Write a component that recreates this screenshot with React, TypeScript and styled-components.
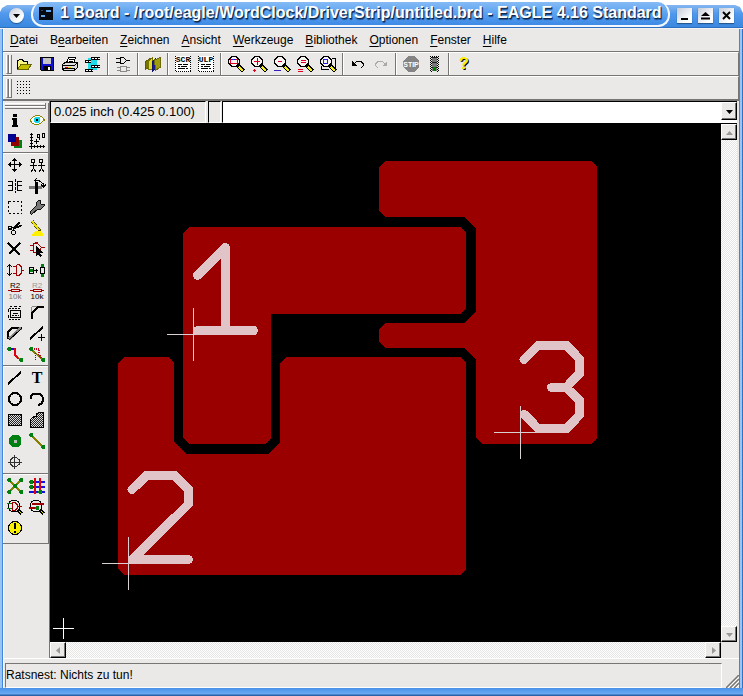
import React from "react";
import styled, { createGlobalStyle, css } from "styled-components";

const GREY = "#eae9e8";
const SHADE = "#777675";

const GlobalStyle = createGlobalStyle`
  * { box-sizing: border-box; }
  body {
    margin: 0;
    background: #fff;
    color: #000;
    font-family: "Liberation Sans", Arial, sans-serif;
    font-size: 12px;
  }
  button, input { font: inherit; color: inherit; }
`;

const Window = styled.div`
  display: flex;
  flex-direction: column;
  height: 100vh;
`;

const TitleBar = styled.header`
  display: flex;
  flex: none;
  align-items: flex-start;
  height: 29px;
  padding-right: 9px;
  background: linear-gradient(
    #fff 5px, #86b6f1 5px, #4f98ec 14px, #3b88e0 27px, #2d6fc0 27px 28px, #f4f3f2 28px
  );
  clip-path: polygon(
    0 12px, 2px 8px, 7px 5px, 34px 5px, 34px 0,
    calc(100% - 76px) 0, calc(100% - 76px) 5px, calc(100% - 8px) 5px, calc(100% - 3px) 7px, 100% 13px,
    100% 100%, 0 100%
  );
`;

const TitleTab = styled.div`
  display: flex;
  flex: 1;
  min-width: 0;
  align-items: center;
  gap: 7px;
  height: 25px;
  margin: 2px 7px 0 7px;
  padding: 0 0 1px 6px;
  border: solid #f4f9ff;
  border-width: 0 2px 2px 2px;
  border-radius: 12px;
  background: linear-gradient(#86bbf5, #5fa4f1 45%, #3d8ae6);
`;

const Title = styled.h1`
  flex: 1;
  margin: 0;
  color: #fff;
  font-size: 16px;
  font-weight: bold;
  line-height: 22px;
  white-space: nowrap;
  text-shadow: 1px 1px 0 #10294a, 1px 2px 1px #1d4c8c;
`;

const TitleButton = styled.button<{ $round?: boolean }>`
  display: grid;
  flex: none;
  place-items: center;
  width: 15px;
  height: 15px;
  padding: 0;
  border: 0;
  background: linear-gradient(135deg, #c6ccd6, #ffffff 75%);
  box-shadow: 0 1px 1px #24588f;
  ${(p) =>
    p.$round &&
    css`
      margin: 8px 0 0 9px;
      border-radius: 50%;
    `}
`;

const WindowButtons = styled.div`
  display: flex;
  gap: 6px;
  padding-top: 8px;
`;

const Frame = styled.div`
  display: flex;
  flex: 1;
  min-height: 0;
  padding: 0 4px 8px 3px;
  background:
    linear-gradient(#4a92e8, #6aaaf2 6px, #2a62a8 7px) 0 100% / 100% 8px no-repeat,
    linear-gradient(90deg, #9cc4f3 2px, #3f87dd 2px 3px, #fff 3px calc(100% - 4px), #3f87dd calc(100% - 4px) calc(100% - 3px), #9cc4f3 calc(100% - 3px) calc(100% - 1px), #2f73c8 calc(100% - 1px));
`;

const Panel = styled.div`
  display: flex;
  flex: 1;
  flex-direction: column;
  min-width: 0;
  background: ${GREY};
  box-shadow: inset 1px 0 0 #fff;
`;

const MenuBar = styled.nav`
  display: flex;
  flex: none;
  gap: 12px;
  height: 23px;
  padding-left: 7px;
  border-bottom: 1px solid ${SHADE};
`;

const MenuItem = styled.button`
  padding: 0;
  border: 0;
  background: none;
  line-height: 22px;
  u { text-underline-offset: 2px; }
`;

const Toolbar = styled.div`
  display: flex;
  flex: none;
  align-items: center;
  height: 24px;
  padding-left: 3px;
  border-top: 1px solid #fff;
  border-bottom: 1px solid ${SHADE};
  border-right: 1px solid ${SHADE};
`;

const Grip = styled.span`
  flex: none;
  width: 6px;
  height: 19px;
  border: 1px solid ${SHADE};
  border-top: 0;
  border-left-color: #fff;
  background: linear-gradient(90deg, #aaa9a8 1px, ${SHADE} 1px 2px, #fff 2px 3px, ${GREY} 3px);
`;

const PaletteGrip = styled.div`
  height: 6px;
  margin: 2px 2px 0;
  border: solid ${SHADE};
  border-width: 0 1px 1px 0;
  background: linear-gradient(#fff 1px, ${GREY} 1px 2px, ${SHADE} 2px 3px, #fff 3px 4px, ${GREY} 4px);
`;

const Separator = styled.span`
  flex: none;
  align-self: stretch;
  width: 2px;
  margin: 0 2px 0 3px;
  border-left: 1px solid ${SHADE};
  border-right: 1px solid #fff;
`;

const ToolButton = styled.button`
  display: grid;
  flex: none;
  place-items: center;
  width: 23px;
  height: 21px;
  padding: 0;
  border: 0;
  background: none;
`;

const Body = styled.div`
  display: flex;
  flex: 1;
  min-height: 0;
  border-top: 1px solid ${SHADE};
`;

const SideColumn = styled.aside`
  flex: none;
  width: 47px;
  border-right: 1px solid ${SHADE};
`;

const Palette = styled.div`
  padding-bottom: 5px;
  border-right: 1px solid ${SHADE};
  border-bottom: 1px solid ${SHADE};
`;

const PaletteGroup = styled.div`
  display: grid;
  grid-template-columns: 22px 22px;
  grid-auto-rows: 21px;
  padding-left: 1px;
  & + & {
    margin-top: 1px;
    padding-top: 1px;
    border-top: 1px solid ${SHADE};
    box-shadow: inset 0 1px 0 #fff;
  }
  button { width: 22px; }
`;

const Workspace = styled.main`
  display: flex;
  flex: 1;
  flex-direction: column;
  min-width: 0;
  padding-right: 2px;
`;

const CommandRow = styled.div`
  display: flex;
  flex: none;
  height: 22px;
`;

const Coordinates = styled.output`
  width: 156px;
  margin-right: 2px;
  padding-left: 3px;
  border: 1px solid #000;
  border-right-color: #fff;
  border-bottom-color: #fff;
  line-height: 20px;
  font-size: 13px;
`;

const StatusCell = styled.span`
  width: 13px;
  margin-right: 1px;
  border: 1px solid #000;
  border-right-color: #fff;
  border-bottom-color: #fff;
`;

const Combo = styled.div`
  display: flex;
  flex: 1;
  min-width: 0;
  padding-bottom: 1px;
  border: 1px solid #000;
  border-right: 0;
  border-bottom: 1px solid #fff;
  background: #fff;
`;

const CommandInput = styled.input`
  flex: 1;
  min-width: 0;
  padding: 0 4px;
  border: 0;
  outline: 0;
  background: transparent;
`;

const BevelButton = styled.button`
  display: grid;
  flex: none;
  place-items: center;
  width: 16px;
  height: 18px;
  padding: 0;
  border: 1px solid #000;
  border-top-color: #fff;
  border-left-color: #fff;
  background: ${GREY};
  box-shadow: inset -1px -1px 0 ${SHADE};
`;

const ViewGrid = styled.div`
  display: grid;
  flex: 1;
  grid-template: minmax(0, 1fr) 16px / minmax(0, 1fr) 16px;
  min-height: 0;
  border-top: 1px solid #000;
`;

const Canvas = styled.div`
  overflow: hidden;
  background: #000;
  svg { display: block; }
`;

const ScrollBar = styled.div<{ $vertical?: boolean }>`
  display: flex;
  flex-direction: ${(p) => (p.$vertical ? "column" : "row")};
  justify-content: space-between;
  background: repeating-conic-gradient(#fff 0 25%, #e6e5e4 0 50%) 0 0 / 2px 2px;
  button { width: 16px; height: 16px; }
`;

const StatusBar = styled.footer`
  display: flex;
  flex: none;
  align-items: flex-end;
  justify-content: space-between;
  height: 30px;
  padding-left: 2px;
  border-top: 1px solid #fff;
`;

const StatusText = styled.div`
  flex: 1;
  height: 25px;
  margin-right: 4px;
  border: 1px solid ${SHADE};
  border-right-color: #fff;
  border-bottom-color: #fff;
  line-height: 22px;
`;

const IconSvg = styled.svg`
  display: block;
  overflow: visible;
`;

const Icon = ({ children }: { children: React.ReactNode }) => (
  <IconSvg width="18" height="18" viewBox="0 0 18 18" fill="none" stroke="#000" shapeRendering="crispEdges" aria-hidden="true">
    {children}
  </IconSvg>
);

const Triangle = ({ dir, color = "#000" }: { dir: "up" | "down" | "left" | "right"; color?: string }) => {
  const points = { up: "0,6 7,6 3.5,2", down: "0,2 7,2 3.5,6", left: "5,0 5,7 1,3.5", right: "2,0 2,7 6,3.5" };
  return (
    <svg width="7" height="7" viewBox="0 0 7 7" aria-hidden="true">
      <polygon points={points[dir]} fill={color} />
    </svg>
  );
};

const Magnifier = ({ children }: { children: React.ReactNode }) => (
  <Icon>
    <path d="M11 10.500L16.500 16" strokeWidth="4" />
    <path d="M12 12L16 16" stroke="#f4ee20" strokeWidth="2" />
    <path d="M5 1.500H9L12.500 5V8L9 11.500H5L1.500 8V5Z" fill="#f8f4f4" />
    {children}
  </Icon>
);

const Page = ({ label }: { label: string }) => (
  <Icon>
    <rect x="1" y="1" width="16" height="16" fill="#fff" stroke="none" />
    <path d="M2 16.500H17" strokeDasharray="1 1" />
    <path d="M1.500 1V17M16.500 1V17" strokeDasharray="1 1" />
    <path d="M4 9.500H8M9 9.500H14M4 11.500H6M7 11.500H13M4 13.500H11M12 13.500H14" />
    <text x="9" y="7" textAnchor="middle" fontFamily="Liberation Mono" fontWeight="bold" fontSize="8" fill="#000" stroke="none">
      {label}
    </text>
  </Icon>
);

const Resistor = ({ label, value }: { label: string; value: string }) => (
  <Icon>
    <g stroke="none" fontFamily="Liberation Sans" fontSize="8" textAnchor="middle">
      <text x="9" y="6" fill={label}>R2</text>
      <text x="9" y="17" fill={value}>10k</text>
    </g>
    <path d="M2 8.500H5M14 8.500H16M5.500 7.500H13.500V9.500H5.500Z" stroke="#a00000" />
  </Icon>
);

const Dither = ({ id, d }: { id: string; d: string }) => (
  <Icon>
    <defs>
      <pattern id={id} width="2" height="2" patternUnits="userSpaceOnUse">
        <rect width="2" height="2" fill="#ddd" stroke="none" />
        <rect width="1" height="1" fill="#222" stroke="none" />
        <rect x="1" y="1" width="1" height="1" fill="#222" stroke="none" />
      </pattern>
    </defs>
    <path d={d} fill={`url(#${id})`} />
  </Icon>
);

const GreenDot = ({ x, y }: { x: number; y: number }) => (
  <path d={`M${x - 1} ${y - 2}h2l1 1v2l-1 1h-2l-1 -1v-2z`} fill="#008010" stroke="none" />
);

type Tool = [string, React.ReactNode];

const TOOLBAR: Tool[][] = [
  [
    ["Öffnen", <Icon><path d="M2.500 14V5.500H3.500L4.500 4.500H7.500L8.500 6.500H12.500V9" fill="#f8f480" /><path d="M2.500 14.500L6 9.500H16.500L13 14.500Z" fill="#c4be00" stroke="#6a6600" /></Icon>],
    ["Speichern", <Icon><path d="M2.500 2.500H15.500V15.500H3.500L2.500 14.500Z" fill="#1010d0" /><rect x="5" y="3" width="8" height="6" fill="#c4c4c4" stroke="none" /><rect x="5" y="11" width="8" height="5" fill="#000" stroke="none" /><rect x="10" y="12" width="2" height="3" fill="#fff" stroke="none" /></Icon>],
    ["Drucken", <Icon><path d="M5.500 8L7.500 2.500H14.500L13 8" fill="#fff" /><path d="M8 4.500H13M7.500 6.500H12" /><path d="M1.500 9.500L4 7.500H16.500V12.500L13 15.500H2.500L1.500 13.500Z" fill="#ddd" /><path d="M2 10.500H13.500L16 8M2 13.500H13.500V15" /><path d="M4 12H7" stroke="#d00020" /><path d="M7 12H10" stroke="#e0d000" /></Icon>],
    ["Board", <Icon><path d="M4 9H13" stroke="#20dce8" strokeWidth="12" /><path d="M7 3.500H16M1 6.500H7M7 11.500H16M1 15.500H9" strokeWidth="3" /><path d="M8 3.500H16M2 6.500H7M8 11.500H16M2 15.500H9" stroke="#fff" strokeDasharray="2 1" /></Icon>],
  ],
  [["Schaltplan", <Icon><path d="M6.500 2.500H9.500L12.500 5.500L9.500 8.500H6.500ZM2 3.500H6M2 7.500H6M12 5.500H16" /><path d="M6.500 11.500H12.500V16.500H6.500ZM3 12.500H6M3 15.500H6M13 12.500H16M13 15.500H16" stroke="#888" /></Icon>]],
  [["Bibliothek", <Icon><path d="M1.500 6.500L6 3.500V12L1.500 14Z" fill="#777500" stroke="#5c5a00" /><path d="M4.500 6.500L8 3V14.500L4.500 15Z" fill="#e0dc20" stroke="#777500" /><path d="M8.500 6.500L11 4.500V14L8.500 16Z" fill="#1717a0" stroke="#101070" /><path d="M10.500 5L16.500 2.500V12L11.500 15.500Z" fill="#a09c10" stroke="#6c6a00" /></Icon>]],
  [["Script ausführen", <Page label="SCR" />], ["ULP ausführen", <Page label="ULP" />]],
  [
    ["Einpassen", <Magnifier><rect x="3.500" y="4.500" width="7" height="4" stroke="#e00020" /><path d="M4 4.500H10V8.500" stroke="#2020e0" strokeDasharray="2 1" /></Magnifier>],
    ["Vergrößern", <Magnifier><path d="M4 6.500H10" stroke="#e00020" /><path d="M7.500 3V10" stroke="#2020e0" /><path d="M3 15.500H6M4.500 14V17" stroke="#e00020" /></Magnifier>],
    ["Verkleinern", <Magnifier><path d="M5 6.500H9" stroke="#d00030" /><path d="M1 15.500H8" stroke="#3020c0" /></Magnifier>],
    ["Neu zeichnen", <Magnifier><path d="M5 5.500H10M5 7.500H10M2 14.500H7M2 16.500H7" stroke="#e00020" /></Magnifier>],
    ["Ausschnitt", <Magnifier><path d="M13 3.500H16.500V13M2.500 11V14.500H10" /><rect x="4.500" y="4.500" width="4" height="4" stroke="#2020e0" /></Magnifier>],
  ],
  [
    ["Rückgängig", <Icon><path d="M5 9L7.500 6.500H12L14.500 9V10.500L12 13" /><path d="M3 6V11H8Z" fill="#000" stroke="none" /></Icon>],
    ["Wiederholen", <Icon><path d="M13 9L10.500 6.500H6L3.500 9V10.500L6 13" stroke="#aaa" /><path d="M15 6V11H10Z" fill="#aaa" stroke="none" /></Icon>],
  ],
  [
    ["Stop", <Icon><path d="M6 1H12L17 6V12L12 17H6L1 12V6Z" fill="#848484" stroke="none" /><text x="9" y="12" textAnchor="middle" fontFamily="Liberation Sans" fontWeight="bold" fontSize="7" fill="#fff" stroke="none">STIP</text></Icon>],
    ["Ampel", <Icon><path d="M5.500 1V17M7.500 1V17M9.500 1V17M11.500 1V17M13.500 1V17" strokeDasharray="1 1" /><path d="M6.500 2V17M12.500 2V17" strokeDasharray="1 1" /><rect x="7" y="2" width="5" height="14" fill="#777" stroke="none" /><path d="M7 2H12M7 7H12M7 12H12" stroke="#222" /><circle cx="9.500" cy="14" r="2" fill="#008000" stroke="none" /></Icon>],
  ],
  [["Hilfe", <Icon><g fontFamily="Liberation Sans" fontWeight="bold" fontSize="16" textAnchor="middle" stroke="none"><text x="10" y="15" fill="#000">?</text><text x="9" y="14" fill="#f8f000">?</text></g></Icon>]],
];

const PALETTE: Tool[][] = [
  [
    ["Info", <Icon><path d="M7 3H11V6H7ZM6 7H11V14H12V16H6V14H7V9H6Z" fill="#000" stroke="none" /></Icon>],
    ["Show", <Icon><path d="M2 9L5 6L8 4.500H11L14 6L16.500 9L13 12L10 13.500H7L4 12Z" fill="#fff" stroke="#8a8500" strokeWidth="1" /><path d="M7 6H11L12 7V10L11 12H7L6 10V7Z" fill="#10d8e8" stroke="none" /><rect x="8" y="8" width="2" height="2" fill="#000" stroke="none" /></Icon>],
    ["Display", <Icon><rect x="8" y="8" width="8" height="8" fill="#008010" stroke="none" /><rect x="5" y="5" width="8" height="9" fill="#900000" stroke="none" /><rect x="2" y="2" width="8" height="8" fill="#000090" stroke="none" /></Icon>],
    ["Mark", <Icon><path d="M3.500 1V17M1 14.500H17M2 2.500H5M2 5.500H5M2 8.500H5M2 11.500H5M6.500 13V16M9.500 13V16M12.500 13V16M15.500 13V16M6 9.500H11M8.500 7V12" /><path d="M9.500 2.500H11.500V5.500H9.500ZM11.500 5V7.500M14.500 1.500H16.500V5.500H14.500Z" /></Icon>],
  ],
  [
    ["Move", <Icon><path d="M8.500 2V16M2 8.500H16" /><path d="M6 4.500H11M7 3.500H10M6 13.500H11M7 14.500H10M4.500 6V11M3.500 7V10M13.500 6V11M14.500 7V10" /></Icon>],
    ["Copy", <Icon><path d="M3.500 3.500H6.500V6.500H3.500ZM11.500 3.500H14.500V6.500H11.500Z" /><path d="M5.500 7V12L3 16M5.500 12L8 16M2 9.500H9M13.500 7V12L11 16M13.500 12L16 16M10 9.500H17" /></Icon>],
    ["Mirror", <Icon><path d="M2 4.500H6.500V13.500H2M2 8.500H6M16 4.500H11.500V13.500H16M12 8.500H16" /><path d="M9.500 2V16" strokeDasharray="3 1" /></Icon>],
    ["Rotate", <Icon><rect x="1" y="9" width="13" height="3" fill="#777" stroke="none" /><rect x="7" y="5" width="3" height="12" fill="#000" stroke="none" /><path d="M7 3.500H11L15.500 7V10M13 7.500L15.500 10L18 7.500M9 1L6.500 3.500L9 6" /></Icon>],
    ["Group", <Icon><rect x="2.500" y="3.500" width="13" height="12" strokeDasharray="2 2" /></Icon>],
    ["Change", <Icon><path d="M2 14L8 8V5L11 2H12V5L13 6H16V8L13 11H10L4 16H3L2 15Z" fill="#777" stroke="#111" /></Icon>],
    ["Cut", <Icon><path d="M6 8.500L16 6.500M7 10.500L14 3.500M8 9.500L15 7.500M7 9.500L13 3.500" /><circle cx="4" cy="9" r="2" strokeWidth="1" /><circle cx="7.500" cy="13.500" r="2" strokeWidth="1" /><path d="M2 9.500H6M7.500 11V12" /></Icon>],
    ["Paste", <Icon><path d="M4 2L12 12" strokeWidth="3" stroke="#555000" /><path d="M4 2L11 11" stroke="#eee000" strokeWidth="2" /><path d="M4 16L7 12H12L15 15V17H4Z" fill="#fff000" stroke="none" /></Icon>],
    ["Delete", <Icon><path d="M2 3L14 15M14 3L3 14" strokeWidth="2" /></Icon>],
    ["Add", <Icon><path d="M5.500 3.500H9.500L13.500 7.500L9.500 12.500H5.500ZM2 5.500H5M2 10.500H5M13 7.500H17M7 2.500H10" stroke="#a00000" /><path d="M8 6V16L10 14L12 17L14 16L12 13H15Z" fill="#000" stroke="none" /></Icon>],
    ["Pinswap", <Icon><path d="M3.500 4V15M1 6L3.500 3.500L6 6M1 12L3.500 14.500L6 12" /><path d="M7 5.500H10M7 12.500H10M10.500 3.500H13L15.500 6V12L13 14.500H10.500V3.500M15 9.500H18" stroke="#a00000" /></Icon>],
    ["Gateswap", <Icon><path d="M1.500 6.500H5.500V12.500H1.500ZM6 9.500H10M8.500 7.500V12M12.500 6.500H16.500V12.500H12.500Z" /><path d="M14.500 3V6M14.500 13V16M2 9.500H5" stroke="#008010" strokeWidth="3" /></Icon>],
    ["Name", <Resistor label="#000" value="#777" />],
    ["Value", <Resistor label="#999" value="#000" />],
    ["Smash", <Icon><path d="M4.500 7.500H14.500V14.500H4.500ZM7 10.500H12M4 3.500H6M8 3.500H11M13 3.500H15M2 6V9M2 12V15" /><path d="M3 5.500H15M3 16.500H15M6 12.500H13" strokeDasharray="2 1" /></Icon>],
    ["Miter", <Icon><path d="M3.500 16V4M4 3.500H16" stroke="#888" /><path d="M4 16V10L10 4H16" strokeWidth="2" /></Icon>],
    ["Split", <Icon><path d="M2 15V8L6 4H16" strokeWidth="2" /><path d="M3 15L15 4" stroke="#888" strokeWidth="3" /><path d="M3 16L15 5" /></Icon>],
    ["Optimize", <Icon><path d="M2 15L15 3" strokeWidth="2" /><path d="M10 13.500H17M13.500 10V17" /></Icon>],
    ["Route", <Icon><path d="M3 4H9" stroke="#1010e0" strokeWidth="2" /><path d="M9 3V10L13 14" stroke="#e00010" strokeWidth="2" /><path d="M12 12L15 15" stroke="#888000" /><GreenDot x={3} y={4} /><GreenDot x={15} y={15} /></Icon>],
    ["Ripup", <Icon><path d="M3 4L15 15" stroke="#888000" strokeWidth="2" /><path d="M4 3.500H11V9L14 15" stroke="#c00020" strokeDasharray="1 1" strokeWidth="2" /><path d="M7 8V15" stroke="#2020b0" strokeDasharray="1 1" /><GreenDot x={3} y={4} /><GreenDot x={15} y={15} /></Icon>],
  ],
  [
    ["Wire", <Icon><path d="M2 15L15 3" strokeWidth="2" /></Icon>],
    ["Text", <Icon><text x="9" y="14" textAnchor="middle" fontFamily="Liberation Serif" fontSize="16" fontWeight="bold" fill="#000" stroke="none">T</text></Icon>],
    ["Circle", <Icon><circle cx="9" cy="9" r="6" strokeWidth="2" /></Icon>],
    ["Arc", <Icon><path d="M3 9V6L6 3.500H11L14 6L15 8V11L13 14L10 15" strokeWidth="2" /></Icon>],
    ["Rect", <Dither id="dither-rect" d="M2.500 3.500H15.500V14.500H2.500Z" />],
    ["Polygon", <Dither id="dither-polygon" d="M2.500 16.500V8.500L6 5.500H8.500V3L10.500 1.500H15.500V16.500Z" />],
    ["Via", <Icon><path d="M6 3H12L15 6V12L12 15H6L3 12V6Z" fill="#008010" stroke="none" /><rect x="8" y="8" width="3" height="3" fill="#bbb" stroke="none" /></Icon>],
    ["Signal", <Icon><path d="M3 3L15 15" stroke="#888000" strokeWidth="1.500" /><GreenDot x={3} y={3} /><GreenDot x={15} y={15} /></Icon>],
    ["Hole", <Icon><path d="M7 4.500H10L13.500 7V11L10 13.500H7L4.500 11V7ZM2 9.500H16M8.500 2V16" stroke="#333" /></Icon>],
  ],
  [
    ["Ratsnest", <Icon><path d="M3 3L15 15M15 3L3 15" stroke="#888000" strokeWidth="1.500" /><GreenDot x={3} y={3} /><GreenDot x={15} y={3} /><GreenDot x={9} y={9} /><GreenDot x={3} y={15} /><GreenDot x={15} y={15} /></Icon>],
    ["Auto", <Icon><path d="M1 5H17M1 10H17M1 15H17" stroke="#1010e0" strokeWidth="2" strokeDasharray="5 1" /><path d="M7 1V17M12 1V17" stroke="#e00010" strokeWidth="2" /><GreenDot x={3} y={5} /><GreenDot x={3} y={10} /><GreenDot x={12} y={15} /></Icon>],
    ["ERC", <Icon><circle cx="8" cy="8" r="6" /><path d="M1 5.500H6M1 10.500H6" stroke="#008010" strokeWidth="1" /><path d="M6 4.500H9L11.500 7V10L9 12.500H6ZM12 8.500H16" stroke="#a00000" /><path d="M12 12L16 16" strokeWidth="3" /><path d="M13 13L16 16" stroke="#f0e800" /></Icon>],
    ["DRC", <Icon><circle cx="8" cy="8" r="6" /><path d="M4 6H16M1 10H9" stroke="#a00000" strokeWidth="2" /><GreenDot x={9} y={10} /><path d="M12 12L16 16" strokeWidth="3" /><path d="M13 13L16 16" stroke="#f0e800" /></Icon>],
    ["Errors", <Icon><circle cx="9" cy="9" r="6.500" fill="#f8f000" /><path d="M9 4V10M9 12V14" strokeWidth="2" /></Icon>],
  ],
];

const MENUS = ["_Datei", "B_earbeiten", "_Zeichnen", "_Ansicht", "_Werkzeuge", "_Bibliothek", "_Optionen", "_Fenster", "_Hilfe"];

const MenuLabel = ({ text }: { text: string }) => {
  const at = text.indexOf("_");
  return (
    <>
      {text.slice(0, at)}
      <u>{text[at + 1]}</u>
      {text.slice(at + 2)}
    </>
  );
};

const BoardDrawing = () => (
  <svg width="671" height="518" viewBox="50 124 671 518" shapeRendering="crispEdges" role="img" aria-label="Board">
    <g fill="#9a0000">
      <path d="M189 227H460L466 233V308L460 314H271V438L265 444H189L183 438V233Z" />
      <path d="M124 357H168L174 363V442L186 454H268L280 442V363L286 357H460L466 363V569L460 575H124L118 569V363Z" />
      <path d="M385 161H591L597 167V438L591 444H482L476 438V360L464 348H385L379 342V329L385 323H464L476 312V229L464 217H385L379 211V167Z" />
    </g>
    <g fill="none" stroke="#d8d0d2" strokeWidth="1">
      <path d="M167 334.500H220M193.500 308V361" />
      <path d="M102 563.500H155M128.500 537V590" />
      <path d="M494 432.500H547M520.500 406V459" />
      <path d="M53 628.500H74M63.500 618V639" stroke="#fff" />
    </g>
    <g fill="none" stroke="#e0c4c8" strokeWidth="9" strokeLinecap="round" strokeLinejoin="miter" strokeMiterlimit="2">
      <path d="M197.500 275.500L225.500 247.500V330.500M197.500 330.500H253.500" strokeLinejoin="round" />
      <path d="M132 489.500L146.500 475.500H174.500L188.500 489.500V504L132.500 559.500H188.500" />
      <path d="M128 564V557L134 552L140 564Z" fill="#e0c4c8" stroke="none" />
      <path d="M524 359.500L538 345.500H566.500L579.500 359V373.500L566 387.500H551.500M566 387.500L579.500 400.500V415L566.500 428.500H538L524.500 414.500" />
    </g>
  </svg>
);

export default function App() {
  return (
    <Window>
      <GlobalStyle />
      <TitleBar>
        <TitleButton $round aria-label="Fenstermenü"><Triangle dir="down" /></TitleButton>
        <TitleTab>
          <svg width="14" height="13" viewBox="0 0 14 13" shapeRendering="crispEdges" aria-hidden="true">
            <rect width="14" height="13" fill="#050a10" />
            <path d="M7 3.500H12M2 8.500H6" stroke="#5fa8f0" strokeWidth="2" />
            <path d="M2 3H4" stroke="#24486c" strokeWidth="1" />
          </svg>
          <Title>1 Board - /root/eagle/WordClock/DriverStrip/untitled.brd - EAGLE 4.16 Standard</Title>
        </TitleTab>
        <WindowButtons>
          <TitleButton aria-label="Minimieren">
            <svg width="9" height="9" viewBox="0 0 9 9"><path d="M1 8H8" stroke="#000" strokeWidth="2" /></svg>
          </TitleButton>
          <TitleButton aria-label="Maximieren">
            <svg width="9" height="9" viewBox="0 0 9 9"><path d="M0 5L4.500 1L9 5ZM0 6.500H9V8.500H0Z" /></svg>
          </TitleButton>
          <TitleButton aria-label="Schließen">
            <svg width="9" height="9" viewBox="0 0 9 9"><path d="M1 1L8 8M8 1L1 8" stroke="#000" strokeWidth="2" /></svg>
          </TitleButton>
        </WindowButtons>
      </TitleBar>
      <Frame>
        <Panel>
          <MenuBar>
            {MENUS.map((m) => (
              <MenuItem key={m}><MenuLabel text={m} /></MenuItem>
            ))}
          </MenuBar>
          <Toolbar>
            <Grip />
            {TOOLBAR.map((group, i) => (
              <React.Fragment key={i}>
                {i > 0 && <Separator />}
                {group.map(([name, icon]) => (
                  <ToolButton key={name} aria-label={name}>{icon}</ToolButton>
                ))}
              </React.Fragment>
            ))}
          </Toolbar>
          <Toolbar>
            <Grip />
            <ToolButton aria-label="Raster">
              <Icon>
                {[3, 6, 9, 12, 15].map((y) => (
                  <path key={y} d={`M2 ${y - 0.5}H16`} strokeDasharray="1 2" />
                ))}
              </Icon>
            </ToolButton>
          </Toolbar>
          <Body>
            <SideColumn>
              <Palette>
                <PaletteGrip />
                {PALETTE.map((group, i) => (
                  <PaletteGroup key={i}>
                    {group.map(([name, icon]) => (
                      <ToolButton key={name} aria-label={name}>{icon}</ToolButton>
                    ))}
                  </PaletteGroup>
                ))}
              </Palette>
            </SideColumn>
            <Workspace>
              <CommandRow>
                <Coordinates>0.025 inch (0.425 0.100)</Coordinates>
                <StatusCell />
                <Combo>
                  <CommandInput aria-label="Befehl" />
                  <BevelButton aria-label="Befehlsliste"><Triangle dir="down" /></BevelButton>
                </Combo>
              </CommandRow>
              <ViewGrid>
                <Canvas><BoardDrawing /></Canvas>
                <ScrollBar $vertical>
                  <BevelButton aria-label="Nach oben"><Triangle dir="up" color="#999" /></BevelButton>
                  <BevelButton aria-label="Nach unten"><Triangle dir="down" color="#999" /></BevelButton>
                </ScrollBar>
                <ScrollBar>
                  <BevelButton aria-label="Nach links"><Triangle dir="left" color="#999" /></BevelButton>
                  <BevelButton aria-label="Nach rechts"><Triangle dir="right" color="#999" /></BevelButton>
                </ScrollBar>
              </ViewGrid>
            </Workspace>
          </Body>
          <StatusBar>
            <StatusText>Ratsnest: Nichts zu tun!</StatusText>
            <svg width="13" height="13" viewBox="0 0 13 13" aria-hidden="true">
              <path d="M0 13L13 0M4 13L13 4M8 13L13 8" stroke="#777675" strokeWidth="1.500" />
              <path d="M2 13L13 2M6 13L13 6M10 13L13 10" stroke="#fff" />
            </svg>
          </StatusBar>
        </Panel>
      </Frame>
    </Window>
  );
}
